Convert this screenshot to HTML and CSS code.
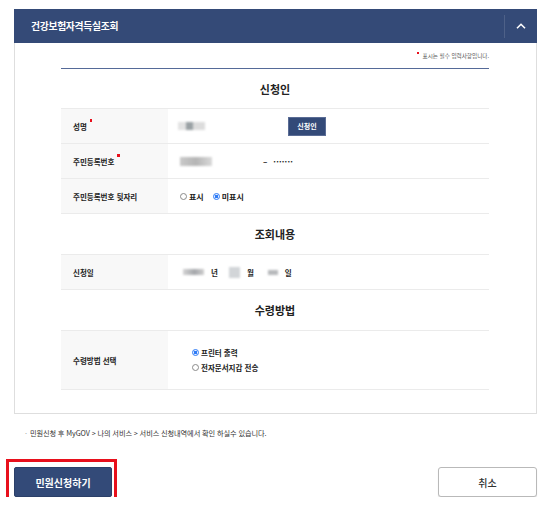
FILE: index.html
```html
<!DOCTYPE html>
<html lang="ko">
<head>
<meta charset="utf-8">
<title>건강보험자격득실조회</title>
<link rel="stylesheet" href="styles.css">
</head>
<body>
<div class="page">
  <section class="acc">
    <div class="acc-head">
      <h2 class="acc-title">건강보험자격득실조회</h2>
      <div class="acc-toggle">
        <svg width="10" height="6" viewBox="0 0 10 6"><path d="M1 5.2 L5 1.3 L9 5.2" stroke="#fff" stroke-width="1.6" fill="none"/></svg>
      </div>
    </div>
    <div class="acc-body">
      <p class="req-note"><span class="req-dot"></span>표시는 필수 입력사항입니다.</p>
      <div class="form">
        <h3 class="sec-title first">신청인</h3>
        <div class="rows">
          <div class="row">
            <div class="th">성명<span class="req"></span></div>
            <div class="td">
              <span class="fld w-name"><span class="blur b-name"></span></span>
              <button class="btn-small">신청인</button>
            </div>
          </div>
          <div class="row tall">
            <div class="th">주민등록번호<span class="req"></span></div>
            <div class="td">
              <span class="fld w-rrn"><span class="blur b-rrn"></span></span>
              <span class="dash">–</span><span class="dots">·······</span>
            </div>
          </div>
          <div class="row">
            <div class="th">주민등록번호 뒷자리</div>
            <div class="td rad-line">
              <label class="opt"><span class="radio"></span>표시</label>
              <label class="opt"><span class="radio on"></span>미표시</label>
            </div>
          </div>
        </div>

        <h3 class="sec-title">조회내용</h3>
        <div class="rows">
          <div class="row">
            <div class="th">신청일</div>
            <div class="td date">
              <span class="blur b-y"></span><span class="unit">년</span>
              <span class="blur b-m"></span><span class="unit">월</span>
              <span class="blur b-d"></span><span class="unit">일</span>
            </div>
          </div>
        </div>

        <h3 class="sec-title">수령방법</h3>
        <div class="rows">
          <div class="row big">
            <div class="th">수령방법 선택</div>
            <div class="td">
              <div class="opt-list">
                <label class="opt"><span class="radio on"></span>프린터 출력</label>
                <label class="opt"><span class="radio"></span>전자문서지갑 전송</label>
              </div>
            </div>
          </div>
        </div>
      </div>
    </div>
  </section>

  <p class="foot"><span class="bul">·</span>민원신청 후 MyGOV &gt; 나의 서비스 &gt; 서비스 신청내역에서 확인 하실수 있습니다.</p>

  <div class="actions">
    <span class="mark"><button class="btn primary">민원신청하기</button></span>
    <button class="btn ghost">취소</button>
  </div>
</div>
</body>
</html>
```

FILE: styles.css
```css
html, body {
  margin: 0;
  background: #fff;
}
body {
  font-family: "Noto Sans CJK KR", "Noto Sans", sans-serif;
  color: #222;
}
.page {
  padding: 9px 9px 0 14px;
}

/* accordion header */
.acc-head {
  height: 34px;
  background: #344a77;
  display: flex;
  align-items: center;
}
.acc-title {
  flex: 1;
  margin: 0;
  padding-left: 17px;
  font-size: 9.8px;
  font-weight: 700;
  color: #fff;
  letter-spacing: -0.3px;
}
.acc-toggle {
  width: 32px;
  height: 23px;
  border-left: 1px solid rgba(255, 255, 255, 0.13);
  display: flex;
  align-items: center;
  justify-content: center;
}

/* accordion body */
.acc-body {
  border: 1px solid #dedede;
  border-top: 0;
  padding: 8px 47px 23px 46px;
}
.req-note {
  margin: 0;
  text-align: right;
  font-size: 5.6px;
  line-height: 10px;
  color: #555;
}
.req-dot {
  display: inline-block;
  width: 2px;
  height: 2px;
  background: #e8101c;
  vertical-align: 4px;
  margin-right: 4px;
}
.form {
  margin-top: 7px;
  border-top: 1px solid #556a98;
}
.sec-title {
  margin: 0;
  height: 40px;
  display: flex;
  align-items: center;
  justify-content: center;
  font-size: 11px;
  font-weight: 700;
  color: #222;
}
.sec-title.first {
  height: 39px;
}
.rows {
  border-top: 1px solid #ebebeb;
}
.row {
  display: flex;
  height: 34px;
  border-bottom: 1px solid #ebebeb;
}
.row.big {
  height: 58px;
}
.th {
  width: 95px;
  flex: none;
  padding-left: 12px;
  background: #f8f8f8;
  display: flex;
  align-items: center;
  font-size: 7.5px;
  font-weight: 700;
  color: #222;
}
.req {
  display: inline-block;
  width: 2.5px;
  height: 2.5px;
  background: #e8101c;
  align-self: flex-start;
  margin-top: 10px;
  margin-left: 3px;
}
.td {
  flex: 1;
  padding-left: 10px;
  display: flex;
  align-items: center;
  font-size: 8px;
  font-weight: 700;
  color: #222;
}

/* blurred personal data */
.blur {
  display: inline-block;
  height: 8px;
  filter: blur(1px);
}
.fld {
  display: inline-flex;
  align-items: center;
}
.w-name { width: 110px; }
.b-name {
  width: 27px;
  background: linear-gradient(90deg, #e3e3e3 0 30%, #9aa1a4 30% 55%, #dcdcdc 55% 100%);
}
.w-rrn { width: 85px; }
.b-rrn {
  width: 32px;
  height: 9px;
  margin-left: 2px;
  background: linear-gradient(90deg, #c9c9c9, #b5b5b5 50%, #d9d9d9);
}
.btn-small {
  width: 38px;
  height: 19px;
  padding: 0;
  border: 1px solid #5a6c95;
  background: #334a78;
  color: #fff;
  font-family: inherit;
  font-size: 7px;
  font-weight: 700;
}
.dash {
  font-size: 8px;
  font-weight: 700;
  margin-right: 6px;
}
.dots {
  font-size: 8px;
  letter-spacing: 0.2px;
}

/* radios */
.opt {
  display: inline-flex;
  align-items: center;
  margin-right: 7px;
}
.radio {
  display: inline-block;
  width: 5px;
  height: 5px;
  border: 1px solid #8a8a8a;
  border-radius: 50%;
  background: #fff;
  margin: 0 2px 0 2px;
}
.radio.on {
  border-color: #2f7cf6;
  background: radial-gradient(circle, #2f7cf6 0 45%, #e6efff 55%);
}
.opt-list {
  display: flex;
  flex-direction: column;
  gap: 4px;
  padding-left: 12px;
  font-size: 7.5px;
}
.opt-list .opt {
  margin: 0;
}

/* date */
.date .b-y {
  width: 21px;
  margin-left: 5px;
  background: linear-gradient(90deg, #d4d4d4, #a5a7ab 55%, #cfcfcf);
  height: 6px;
}
.date .b-m {
  width: 11px;
  height: 11px;
  margin-left: 11px;
  background: #d2d5d8;
}
.date .b-d {
  width: 10px;
  height: 5px;
  margin-left: 14px;
  background: #b7b9bc;
}
.unit {
  font-size: 7.5px;
  margin-left: 7px;
}

/* footnote */
.foot {
  margin: 14px 0 0 11px;
  font-size: 7.2px;
  line-height: 10px;
  color: #333;
  letter-spacing: -0.1px;
}
.bul {
  color: #999;
  margin-right: 3px;
}

/* actions */
.actions {
  margin-top: 29px;
  display: flex;
  justify-content: space-between;
  align-items: center;
}
.mark {
  position: relative;
  display: inline-flex;
}
.mark::after {
  content: "";
  position: absolute;
  top: -8px;
  left: -8px;
  right: -5px;
  bottom: -6px;
  border: 3px solid #e8101c;
}
.btn {
  height: 30px;
  padding: 0;
  font-family: inherit;
  font-size: 10px;
  font-weight: 700;
  border-radius: 2px;
  cursor: pointer;
}
.primary {
  width: 98px;
  background: #334a78;
  color: #fff;
  border: 1px solid #2c4069;
}
.ghost {
  width: 99px;
  background: #fff;
  color: #333;
  border: 1px solid #b9b9b9;
  border-radius: 3px;
  box-shadow: 0 1px 1px rgba(0, 0, 0, 0.12);
  font-weight: 500;
}
```
